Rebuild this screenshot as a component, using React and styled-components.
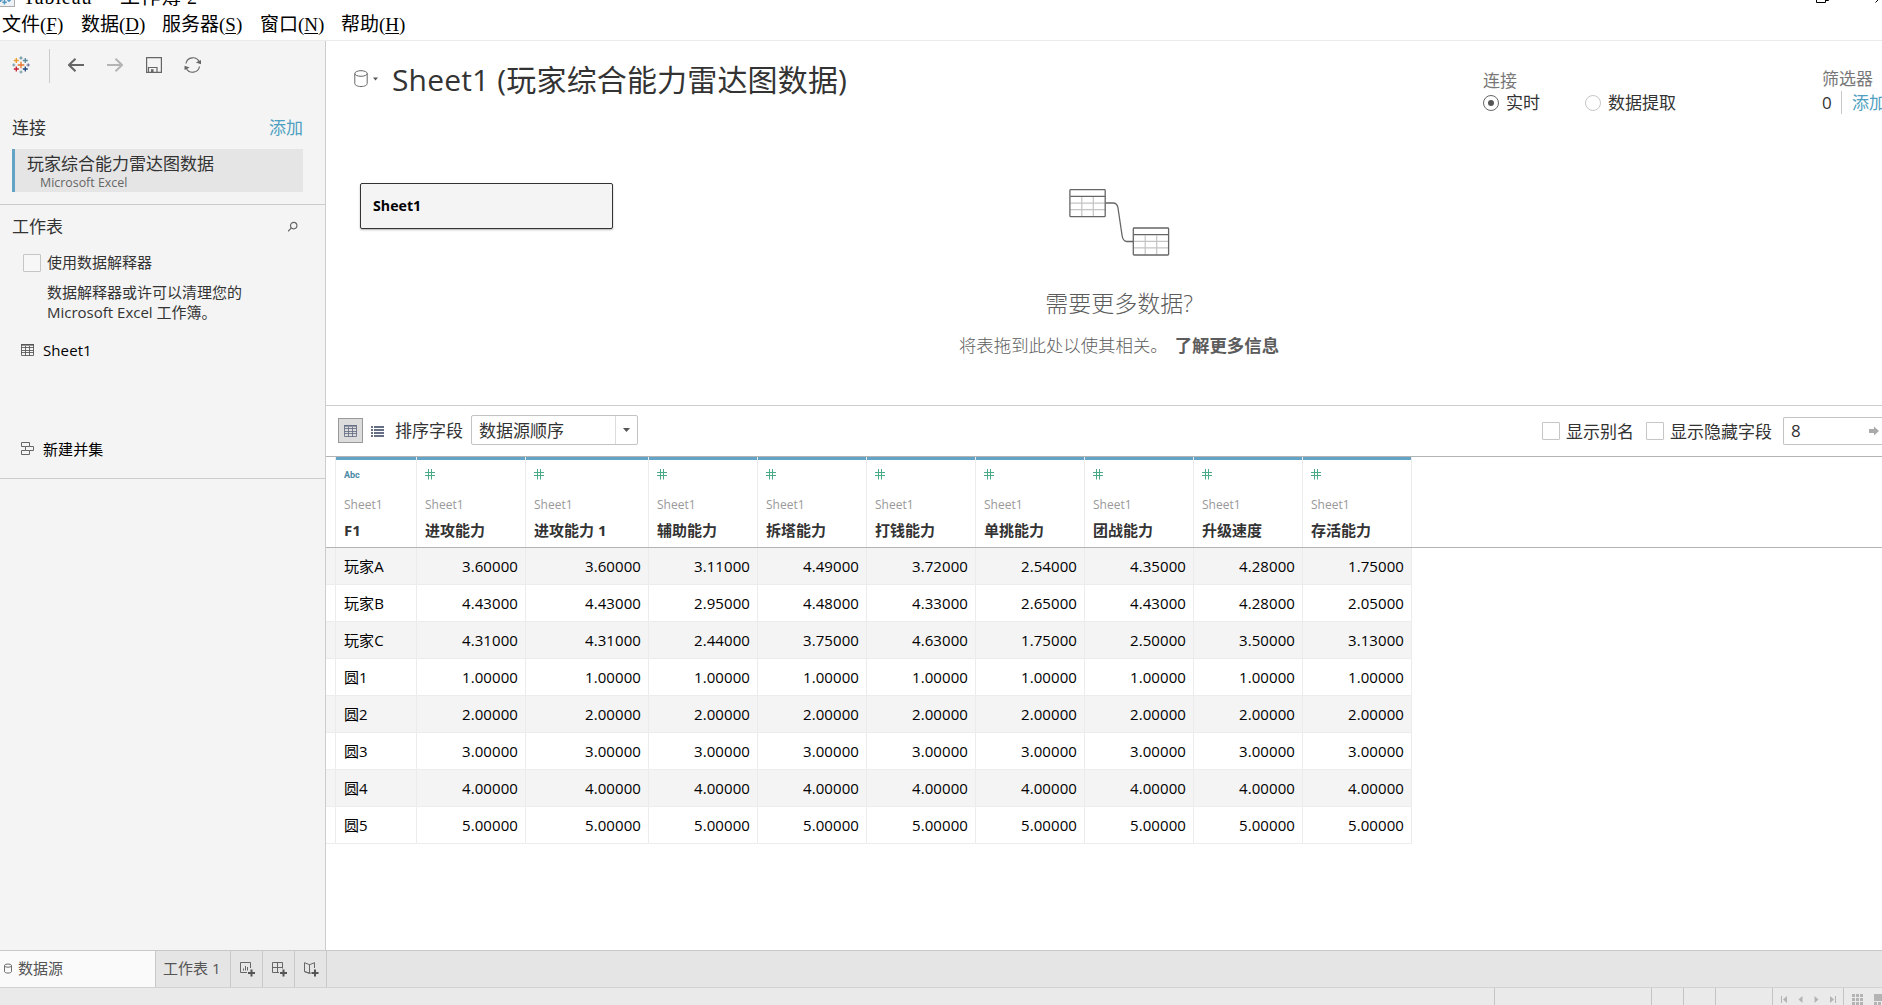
import React from "react";
import styled, { createGlobalStyle } from "styled-components";

const Global = createGlobalStyle`
  * { box-sizing: border-box; }
  html, body { margin: 0; padding: 0; overflow: hidden; }
  body {
    font-family: "Open Sans", "Noto Sans CJK SC", sans-serif;
    color: #333;
    background: #fff;
    white-space: nowrap;
  }
  svg { display: block; flex: none; }
`;

const Window = styled.div`
  width: 1882px;
  height: 1005px;
  display: flex;
  flex-direction: column;
  overflow: hidden;
`;

/* ---------- title bar and menu ---------- */

const TitleBar = styled.div`
  height: 8px;
  display: flex;
  align-items: flex-end;
  overflow: hidden;
  font-family: "Liberation Serif", "Noto Sans CJK SC", serif;
  color: #000;
`;

const AppIcon = styled.div`
  width: 15px;
  height: 20px;
  margin: 0 8px 1px 0;
  border: 1px solid #aaa;
  border-left: 0;
  background: #eef2f6;
  display: flex;
  align-items: flex-end;
  flex: none;
`;

const TitleText = styled.div`
  height: 26px;
  line-height: 26px;
  font-size: 20px;
  letter-spacing: ${(p) => p.$track || 0}px;
  width: ${(p) => p.$w}px;
  margin-bottom: -2px;
  flex: none;
`;

const WindowButtons = styled.div`
  display: flex;
  align-items: flex-end;
  gap: 46px;
  height: 20px;
  margin: 0 -10px 5px auto;
`;

const MenuBar = styled.div`
  height: 33px;
  padding-left: 2px;
  display: flex;
  border-bottom: 1px solid #ebebeb;
  font-family: "Liberation Serif", "Noto Sans CJK SC", serif;
  font-size: 19px;
  line-height: 33px;
  color: #000;
`;

const MenuItem = styled.div`
  width: ${(p) => p.$w}px;
`;

const Key = styled.span`
  text-decoration: underline;
  text-underline-offset: 2px;
`;

/* ---------- left panel ---------- */

const Main = styled.div`
  height: 909px;
  display: flex;
`;

const Side = styled.aside`
  width: 326px;
  background: #f4f4f4;
  border-right: 1px solid #cdcdcd;
  display: flex;
  flex-direction: column;
`;

const ToolRow = styled.div`
  height: 50px;
  padding: 0 0 2px 12px;
  display: flex;
  align-items: center;
`;

const ToolSlot = styled.div`
  width: ${(p) => p.$w}px;
  display: flex;
`;

const ToolDivider = styled.div`
  width: 1px;
  height: 34px;
  margin: 2px 18px 0 0;
  background: #cbcbcb;
`;

const SectionHead = styled.div`
  display: flex;
  justify-content: space-between;
  align-items: center;
  height: 26px;
  padding: 0 22px 0 12px;
  margin-top: ${(p) => p.$top}px;
  font-size: 17px;
  line-height: 26px;
`;

const Link = styled.span`
  color: #4e9fc1;
`;

const Connection = styled.div`
  width: 291px;
  height: 43px;
  margin: 8px 0 12px 12px;
  padding: 2px 0 0 12px;
  background: #e5e5e5;
  border-left: 3px solid #62a3c6;
  font-size: 17px;
  line-height: 25px;
`;

const ConnectionKind = styled.div`
  padding: 1px 0 0 13px;
  font-size: 12.4px;
  line-height: 12px;
  color: #666;
`;

const Rule = styled.div`
  height: 1px;
  margin-top: ${(p) => p.$top || 0}px;
  background: #cdcdcd;
  flex: none;
`;

const CheckRow = styled.div`
  display: flex;
  align-items: center;
  height: 24px;
  margin: 11px 0 0 23px;
  gap: 6px;
  font-size: 15px;
`;

const CheckText = styled.span`
  height: 24px;
  line-height: 22px;
`;

const Box = styled.span`
  width: 18px;
  height: 18px;
  border: 1px solid #c6c6c6;
  border-radius: 1px;
  background: ${(p) => p.$bg || "#f7f7f7"};
  flex: none;
`;

const Hint = styled.p`
  margin: 7px 0 0 47px;
  font-size: 15px;
  line-height: 20px;
`;

const SideItem = styled.div`
  display: flex;
  align-items: center;
  height: 24px;
  margin: ${(p) => p.$top}px 0 0 21px;
  gap: 9px;
  font-size: 15px;
  letter-spacing: 0.1px;
  color: #000;
`;

/* ---------- canvas ---------- */

const Content = styled.main`
  width: 1556px;
  display: flex;
  flex-direction: column;
  background: #fff;
`;

const Header = styled.header`
  height: 94px;
  padding-left: 28px;
  display: flex;
`;

const SourceIcon = styled.div`
  display: flex;
  align-items: center;
  width: 38px;
  height: 75px;
  gap: 5px;
`;

const Title = styled.h1`
  margin: 0;
  width: 1091px;
  font-size: 30px;
  font-weight: 400;
  line-height: 44px;
  padding-top: 17px;
  letter-spacing: 0.16px;
`;

const OptionGroup = styled.div`
  width: ${(p) => p.$w}px;
  padding-top: ${(p) => p.$top}px;
  flex: none;
  font-size: 17px;
  line-height: 22px;
`;

const OptionLabel = styled.div`
  color: #777;
  height: ${(p) => p.$h}px;
`;

const OptionRow = styled.div`
  display: flex;
  align-items: center;
`;

const RadioOption = styled.div`
  display: flex;
  align-items: center;
  gap: 7px;
  width: 102px;
  flex: none;
`;

const Radio = styled.span`
  width: 16px;
  height: 16px;
  border-radius: 50%;
  border: 1px solid ${(p) => (p.$on ? "#666" : "#c8c8c8")};
  display: flex;
  align-items: center;
  justify-content: center;
  flex: none;

  &::after {
    content: "";
    width: 6px;
    height: 6px;
    border-radius: 50%;
    background: ${(p) => (p.$on ? "#555" : "transparent")};
  }
`;

const FilterCount = styled.span`
  width: 19px;
  flex: none;
`;

const FilterDivider = styled.span`
  width: 1px;
  height: 23px;
  background: #c8c8c8;
  margin-right: 10px;
  flex: none;
`;

const Canvas = styled.section`
  height: 270px;
  padding: 48px 0 0 34px;
  display: flex;
  align-items: flex-start;
`;

const TableCard = styled.div`
  width: 253px;
  height: 46px;
  padding-left: 12px;
  border: 1px solid #333;
  border-radius: 2px;
  background: #f4f4f4;
  box-shadow: 0 1px 2px rgba(0, 0, 0, 0.3);
  font-size: 14.2px;
  font-weight: 700;
  line-height: 44px;
  color: #000;
`;

const Empty = styled.div`
  width: 400px;
  margin-left: 306px;
  padding-top: 6px;
  display: flex;
  flex-direction: column;
  align-items: center;
  color: #5c5c5c;
`;

const EmptyTitle = styled.div`
  margin-top: 30px;
  font-size: 23px;
  line-height: 34px;
  font-weight: 300;
`;

const EmptyText = styled.div`
  margin-top: 12px;
  font-size: 17.4px;
  line-height: 26px;
  font-weight: 300;
  display: flex;
  gap: 7px;
`;

const Strong = styled.b`
  font-weight: 700;
`;

/* ---------- grid toolbar ---------- */

const GridBar = styled.div`
  height: 52px;
  padding: 0 0 0 12px;
  display: flex;
  align-items: center;
  border-top: 1px solid #cdcdcd;
  border-bottom: 1px solid #b4b4b4;
  font-size: 17px;
  line-height: 30px;
`;

const ViewButton = styled.div`
  width: 25px;
  height: 25px;
  margin: -1px 8px 0 0;
  border: 1px solid #999;
  background: #dcdcdc;
  display: flex;
  align-items: center;
  justify-content: center;
`;

const SortLabel = styled.span`
  width: 76px;
  margin-left: 11px;
`;

const Select = styled.div`
  width: 167px;
  height: 30px;
  margin-top: -2px;
  border: 1px solid #c3c3c3;
  border-radius: 2px;
  padding-left: 7px;
  display: flex;
  line-height: 30px;
`;

const SelectArrow = styled.div`
  width: 22px;
  margin-left: auto;
  border-left: 1px solid #dcdcdc;
  display: flex;
  align-items: center;
  justify-content: center;
`;

const Checks = styled.div`
  display: flex;
  align-items: center;
  margin: -1px 0 0 auto;
`;

const CheckLabel = styled.span`
  width: ${(p) => p.$w}px;
  height: 30px;
  line-height: 31px;
  padding-left: 6px;
`;

const RowCount = styled.div`
  width: 99px;
  height: 28px;
  padding: 0 3px 0 7px;
  border: 1px solid #c3c3c3;
  border-right: 0;
  border-radius: 2px 0 0 2px;
  display: flex;
  align-items: center;
  justify-content: space-between;
`;

/* ---------- data grid ---------- */

const HeadRow = styled.div`
  height: 91px;
  padding-left: 9px;
  display: flex;
  border-bottom: 1px solid #b4b4b4;
`;

const HeadCell = styled.div`
  width: ${(p) => p.$w}px;
  padding-left: 8px;
  border-left: 1px solid #ececec;
  background: linear-gradient(#62a3c6, #62a3c6) 0 0 / 100% 3px no-repeat;
`;

const HeadEnd = styled.div`
  width: 1px;
  background: #ececec;
`;

const TypeMark = styled.div`
  height: 36px;
  padding-top: 12px;
  font-family: Roboto, "Open Sans", sans-serif;
  font-size: 9px;
  font-weight: 700;
  line-height: 12px;
  color: #4a8aa5;
`;

const TableName = styled.div`
  height: 23px;
  font-size: 12px;
  line-height: 24px;
  color: #999;
`;

const FieldName = styled.div`
  height: 28px;
  font-size: 15px;
  line-height: 28px;
  font-weight: 700;
`;

const Row = styled.div`
  width: 1086px;
  height: 37px;
  padding-left: 9px;
  display: flex;
  border-bottom: 1px solid #ececec;
  background: ${(p) => (p.$odd ? "#f4f4f4" : "#fff")};
  border-right: 1px solid #ececec;
`;

const Cell = styled.div`
  width: ${(p) => p.$w}px;
  padding: 0 7px 0 8px;
  border-left: 1px solid #ececec;
  text-align: ${(p) => (p.$num ? "right" : "left")};
  font-size: 15px;
  letter-spacing: 0.08px;
  line-height: 36px;
  color: #000;
`;

/* ---------- bottom bars ---------- */

const Tabs = styled.div`
  height: 38px;
  display: flex;
  border-top: 1px solid #c8c8c8;
  border-bottom: 1px solid #d2d2d2;
  background: #e5e5e5;
  font-size: 15px;
  line-height: 34px;
  color: #555;
`;

const Tab = styled.div`
  width: ${(p) => p.$w}px;
  padding: 0 0 2px ${(p) => p.$pad}px;
  border-right: 1px solid #c8c8c8;
  background: ${(p) => (p.$active ? "#fafafa" : "transparent")};
  display: flex;
  align-items: center;
  gap: 6px;
`;

const IconTab = styled(Tab)`
  padding-top: 3px;
`;

const Status = styled.div`
  height: 17px;
  display: flex;
  justify-content: flex-end;
  background: #eaeaea;
`;

const StatusCell = styled.div`
  width: ${(p) => p.$w}px;
  border-left: 1px solid #c4c4c4;
  padding: ${(p) => p.$pad || "0"};
  display: flex;
  gap: 11px;
  overflow: hidden;
`;

/* ---------- drawings ---------- */

const plus = (x, y, r) => `M${x - r} ${y}h${2 * r}M${x} ${y - r}v${2 * r}`;

const Logo = () => (
  <svg width="18" height="18" viewBox="0 0 18 18" fill="none" strokeWidth="1.3">
    <path d={plus(9, 9, 3.3)} stroke="#e8762c" />
    <path d={plus(4.3, 4.5, 2.5)} stroke="#eb9b2d" />
    <path d={plus(13.3, 4.5, 2.5)} stroke="#5b879b" />
    <path d={plus(4.3, 13, 2.5)} stroke="#c72035" />
    <path d={plus(13.3, 13, 2.5)} stroke="#1f457e" />
    <path d={plus(9, 2, 1.6)} stroke="#59879b" strokeWidth="1" />
    <path d={plus(9, 16, 1.6)} stroke="#7199a6" strokeWidth="1" />
    <path d={plus(1.8, 9, 1.6)} stroke="#7199a6" strokeWidth="1" />
    <path d={plus(16.2, 9, 1.6)} stroke="#5c6692" strokeWidth="1" />
  </svg>
);

const TitleLogo = () => (
  <svg width="14" height="12" viewBox="0 0 14 12" fill="none" stroke="#4f94bd" strokeWidth="1.4">
    <path d={plus(4.5, 8.3, 2.2) + plus(0.5, 6, 2) + plus(9, 6, 2) + plus(4.5, 3, 2)} />
  </svg>
);

const Restore = () => (
  <svg width="13" height="12" viewBox="0 0 13 12" fill="none" stroke="#000">
    <path d="M.5 2.5h9v9h-9zM3.5 2.5v-2h9v9h-3" />
  </svg>
);

const CloseMark = () => (
  <svg width="17" height="12" viewBox="0 0 17 12" fill="none" stroke="#000">
    <path d="M.5 11.5l11-11M.5.5l11 11" />
  </svg>
);

const Arrow = ({ color, flip }) => (
  <svg width="16" height="14" viewBox="0 0 16 14" fill="none" stroke={color} strokeWidth="2">
    <path d={flip ? "M0 7h15M8.5.7 15 7l-6.500 6.300" : "M16 7H1M7.500.7 1 7l6.500 6.300"} />
  </svg>
);

const Save = () => (
  <svg width="16" height="16" viewBox="0 0 16 16" fill="none" stroke="#666" strokeWidth="1.2">
    <path d="M.6.6h14.800v14.800H.6zM2.500 15.400v-4.900h8.500v4.900" />
    <path d="M5 12.200h2.500v3H5z" fill="#666" stroke="none" />
  </svg>
);

const Refresh = () => (
  <svg width="18" height="16" viewBox="0 0 18 16" fill="none" stroke="#666" strokeWidth="1.2">
    <path d="M2 6.500A7 7 0 0 1 15.300 5M15.500 9.500A7 7 0 0 1 2.200 11" />
    <path d="M11.800 5.600 17 3v4.200zM5.700 10.400.5 13V8.800z" fill="#666" stroke="none" />
  </svg>
);

const Search = () => (
  <svg width="15" height="12" viewBox="0 0 15 12" fill="none" stroke="#666" strokeWidth="1.2">
    <circle cx="5.700" cy="4.600" r="3.200" />
    <path d="M3.400 6.900.1 10.300" />
  </svg>
);

const TableIcon = ({ color }) => (
  <svg width="13" height="12" viewBox="0 0 13 12" fill="none" stroke={color}>
    <path d="M.5.5h12v11H.5zM0 3.500h13M0 6.500h13M0 8.500h13M4.500 2v10M8.500 2v10" strokeOpacity=".85" />
    <path d="M0 .8h13" strokeWidth="1.600" />
  </svg>
);

const ListIcon = () => (
  <svg width="13" height="11" viewBox="0 0 13 11" fill="#666f86">
    <path d="M0 0h2v2H0zM3 0h10v2H3zM0 3h2v2H0zM3 3h10v2H3zM0 6h2v2H0zM3 6h10v2H3zM0 9h2v2H0zM3 9h10v2H3z" />
  </svg>
);

const UnionIcon = () => (
  <svg width="13" height="14" viewBox="0 0 13 14" fill="none" stroke="#666">
    <path d="M4.500 5.500h-4v-4h8v4h4v4h-4v4h-8v-4h4zM4.500 5.500h4M4.500 9.500h4" />
  </svg>
);

const Cylinder = ({ w = 14, h = 17 }) => (
  <svg width={w} height={h} viewBox="0 0 14 17" fill="none" stroke="#666" strokeWidth={w < 12 ? 1.7 : 1}>
    <path d="M.8 3.500v10c0 1.700 2.600 3 6.200 3s6.200-1.300 6.200-3v-10" />
    <ellipse cx="7" cy="3.500" rx="6.200" ry="2.800" />
  </svg>
);

const Caret = ({ w = 7, color = "#555" }) => (
  <svg width={w} height="4" viewBox="0 0 7 4" fill={color}>
    <path d="M0 0h7L3.500 4z" />
  </svg>
);

const TableShape = ({ x, y }) => (
  <g transform={`translate(${x} ${y})`} fill="none">
    <path d="M1 14h35M1 20.500h35M12.500 8v19M24 8v19" stroke="#c4c4c4" strokeWidth="1.200" />
    <rect x=".6" y=".6" width="35.300" height="27" rx=".8" stroke="#666" strokeWidth="1.300" />
    <path d="M1 7.300h35" stroke="#666" strokeWidth="1.200" />
  </g>
);

const RelateDrawing = () => (
  <svg width="101" height="67" viewBox="0 0 101 67">
    <TableShape x={0.3} y={0.1} />
    <TableShape x={63.700} y={38.400} />
    <path d="M37 14h7c3 0 4.500 2 5 5l4 27c.5 4 2 6.500 5 6.500h6" fill="none" stroke="#666" strokeWidth="1.300" />
  </svg>
);

const Hash = () => (
  <svg width="10" height="11" viewBox="0 0 10 11" fill="none" stroke="#4aaa86">
    <path d="M3.500 0v10.500M6.500 0v10.500M0 3.500h10M0 6.500h10" />
  </svg>
);

const GoArrow = () => (
  <svg width="10" height="10" viewBox="0 0 10 10" fill="#aaa">
    <path d="M0 3h5V.5L10 5 5 9.500V7H0z" />
  </svg>
);

const PlusMark = () => <path d="M8 11h7M11.500 7.500v7" stroke="#555" strokeWidth="2" />;

const NewSheet = () => (
  <svg width="16" height="16" viewBox="0 0 16 16" fill="none" stroke="#666">
    <path d="M10.500 6V.5H.5v10H7M3.500 8.500V6.500M5.500 8.500V4M7.500 8.500V5" />
    <PlusMark />
  </svg>
);

const NewDashboard = () => (
  <svg width="16" height="16" viewBox="0 0 16 16" fill="none" stroke="#666">
    <path d="M10.500 6.500V.5H.5v10H7M.5 5.500h10M5.500.5v10" />
    <PlusMark />
  </svg>
);

const NewStory = () => (
  <svg width="17" height="16" viewBox="0 0 17 16" fill="none" stroke="#666">
    <path d="M11.500 6V.7L6.500 2.700 1.500.7v9L6.500 11V2.700M1.500 9.500 6.500 11.500l1.500-.6" />
    <g transform="translate(.5 0)"><PlusMark /></g>
  </svg>
);

const Step = ({ bar, flip }) => (
  <svg width={bar ? 6 : 5} height="7" viewBox={bar ? "0 0 6 7" : "0 0 5 7"} fill="#b4b4b4">
    <g transform={flip ? `translate(${bar ? 6 : 5} 0) scale(-1 1)` : undefined}>
      {bar && <path d="M0 0h1v7H0z" />}
      <path d={bar ? "M6 0v7L2 3.500z" : "M4.500 0v7L.5 3.500z"} />
    </g>
  </svg>
);

const Tiles = () => (
  <svg width="11" height="11" viewBox="0 0 11 11" fill="#b4b4b4">
    <path d="M0 0h3v3H0zM4 0h3v3H4zM8 0h3v3H8zM0 4h3v3H0zM4 4h3v3H4zM8 4h3v3H8zM0 8h3v3H0zM4 8h3v3H4zM8 8h3v3H8z" />
  </svg>
);

const Film = () => (
  <svg width="11" height="11" viewBox="0 0 11 11" fill="#b4b4b4">
    <path d="M0 0h11v7H0zM0 8h3v3H0zM4 8h3v3H4zM8 8h3v3H8z" />
  </svg>
);

/* ---------- data ---------- */

const MENUS = [
  ["文件", "F", 79],
  ["数据", "D", 81],
  ["服务器", "S", 98],
  ["窗口", "N", 81],
  ["帮助", "H", 90],
];

const WIDTHS = [81, 109, 123, 109, 109, 109, 109, 109, 109, 109];
const FIELDS = [
  "F1", "进攻能力", "进攻能力 1", "辅助能力", "拆塔能力",
  "打钱能力", "单挑能力", "团战能力", "升级速度", "存活能力",
];

const RECORDS = [
  ["玩家A", 3.6, 3.6, 3.11, 4.49, 3.72, 2.54, 4.35, 4.28, 1.75],
  ["玩家B", 4.43, 4.43, 2.95, 4.48, 4.33, 2.65, 4.43, 4.28, 2.05],
  ["玩家C", 4.31, 4.31, 2.44, 3.75, 4.63, 1.75, 2.5, 3.5, 3.13],
  ...[1, 2, 3, 4, 5].map((n) => [`圆${n}`, ...Array(9).fill(n)]),
];

export default function App() {
  return (
    <Window>
      <Global />
      <TitleBar>
        <AppIcon><TitleLogo /></AppIcon>
        <TitleText $w={77} $track={0.9}>Tableau</TitleText>
        <TitleText $w={20}>-</TitleText>
        <TitleText $w={90} $track={0.5}>工作簿 2</TitleText>
        <WindowButtons><Restore /><CloseMark /></WindowButtons>
      </TitleBar>
      <MenuBar>
        {MENUS.map(([name, key, w]) => (
          <MenuItem key={key} $w={w}>{name}(<Key>{key}</Key>)</MenuItem>
        ))}
      </MenuBar>

      <Main>
        <Side>
          <ToolRow>
            <ToolSlot $w={37}><Logo /></ToolSlot>
            <ToolDivider />
            <ToolSlot $w={39}><Arrow color="#666" /></ToolSlot>
            <ToolSlot $w={39}><Arrow color="#b4b4b4" flip /></ToolSlot>
            <ToolSlot $w={38}><Save /></ToolSlot>
            <Refresh />
          </ToolRow>
          <SectionHead $top={24}><span>连接</span><Link>添加</Link></SectionHead>
          <Connection>
            玩家综合能力雷达图数据
            <ConnectionKind>Microsoft Excel</ConnectionKind>
          </Connection>
          <Rule />
          <SectionHead $top={9}><span>工作表</span><Search /></SectionHead>
          <CheckRow><Box /><CheckText>使用数据解释器</CheckText></CheckRow>
          <Hint>数据解释器或许可以清理您的<br />Microsoft Excel 工作簿。</Hint>
          <SideItem $top={16}><TableIcon color="#555" />Sheet1</SideItem>
          <SideItem $top={74}><UnionIcon />新建并集</SideItem>
          <Rule $top={18} />
        </Side>

        <Content>
          <Header>
            <SourceIcon>
              <Cylinder />
              <Caret w={5} />
            </SourceIcon>
            <Title>Sheet1 (玩家综合能力雷达图数据)</Title>
            <OptionGroup $w={339} $top={29}>
              <OptionLabel $h={22}>连接</OptionLabel>
              <OptionRow>
                <RadioOption><Radio $on />实时</RadioOption>
                <RadioOption><Radio />数据提取</RadioOption>
              </OptionRow>
            </OptionGroup>
            <OptionGroup $w={60} $top={27}>
              <OptionLabel $h={23}>筛选器</OptionLabel>
              <OptionRow>
                <FilterCount>0</FilterCount>
                <FilterDivider />
                <Link>添加</Link>
              </OptionRow>
            </OptionGroup>
          </Header>

          <Canvas>
            <TableCard>Sheet1</TableCard>
            <Empty>
              <RelateDrawing />
              <EmptyTitle>需要更多数据?</EmptyTitle>
              <EmptyText>将表拖到此处以使其相关。<Strong>了解更多信息</Strong></EmptyText>
            </Empty>
          </Canvas>

          <GridBar>
            <ViewButton><TableIcon color="#666f86" /></ViewButton>
            <ListIcon />
            <SortLabel>排序字段</SortLabel>
            <Select>
              数据源顺序
              <SelectArrow><Caret /></SelectArrow>
            </Select>
            <Checks>
              <Box $bg="#fff" /><CheckLabel $w={86}>显示别名</CheckLabel>
              <Box $bg="#fff" /><CheckLabel $w={119}>显示隐藏字段</CheckLabel>
              <RowCount>8<GoArrow /></RowCount>
            </Checks>
          </GridBar>

          <HeadRow>
            {FIELDS.map((name, i) => (
              <HeadCell key={name} $w={WIDTHS[i]}>
                <TypeMark>{i === 0 ? "Abc" : <Hash />}</TypeMark>
                <TableName>Sheet1</TableName>
                <FieldName>{name}</FieldName>
              </HeadCell>
            ))}
            <HeadEnd />
          </HeadRow>
          {RECORDS.map((record, r) => (
            <Row key={record[0]} $odd={r % 2 === 0}>
              {record.map((value, i) => (
                <Cell key={i} $w={WIDTHS[i]} $num={i > 0}>
                  {i > 0 ? value.toFixed(5) : value}
                </Cell>
              ))}
            </Row>
          ))}
        </Content>
      </Main>

      <Tabs>
        <Tab $w={156} $pad={4} $active><Cylinder w={8} h={11} />数据源</Tab>
        <Tab $w={75} $pad={7}>工作表 1</Tab>
        <IconTab $w={32} $pad={9}><NewSheet /></IconTab>
        <IconTab $w={32} $pad={9}><NewDashboard /></IconTab>
        <IconTab $w={32} $pad={8}><NewStory /></IconTab>
      </Tabs>
      <Status>
        <StatusCell $w={157} />
        <StatusCell $w={32} />
        <StatusCell $w={32} />
        <StatusCell $w={57} />
        <StatusCell $w={71} $pad="8px 0 0 8px">
          <Step bar /><Step /><Step flip /><Step bar flip />
        </StatusCell>
        <StatusCell $w={39} $pad="6px 0 0 8px"><Tiles /><Film /></StatusCell>
      </Status>
    </Window>
  );
}
